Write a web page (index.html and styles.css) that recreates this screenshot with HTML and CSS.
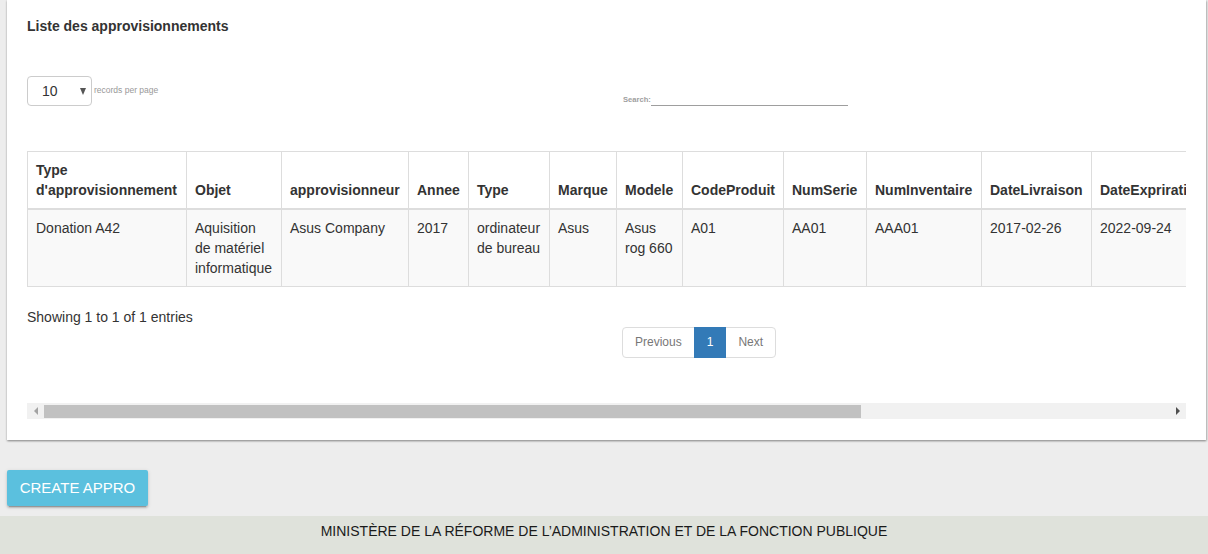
FILE: index.html
```html
<!DOCTYPE html>
<html lang="fr">
<head>
<meta charset="utf-8">
<title>Liste des approvisionnements</title>
<link rel="stylesheet" href="styles.css">
</head>
<body>
<div class="card">
  <h4 class="title">Liste des approvisionnements</h4>
  <div class="wrapper">
    <div class="controls">
      <div class="length">
        <div class="select"><span class="val">10</span><span class="caret"></span></div>
        <span class="lbl">records per page</span>
      </div>
      <div class="search">
        <span class="slbl">Search:</span><span class="sinput"></span>
      </div>
    </div>
    <div class="tablewrap">
      <table class="grid">
        <colgroup>
          <col class="c1"><col class="c2"><col class="c3"><col class="c4"><col class="c5"><col class="c6"><col class="c7"><col class="c8"><col class="c9"><col class="c10"><col class="c11"><col class="c12">
        </colgroup>
        <thead>
          <tr>
            <th>Type d'approvisionnement</th>
            <th>Objet</th>
            <th>approvisionneur</th>
            <th>Annee</th>
            <th>Type</th>
            <th>Marque</th>
            <th>Modele</th>
            <th>CodeProduit</th>
            <th>NumSerie</th>
            <th>NumInventaire</th>
            <th>DateLivraison</th>
            <th>DateExpriration</th>
          </tr>
        </thead>
        <tbody>
          <tr>
            <td>Donation A42</td>
            <td>Aquisition de matériel informatique</td>
            <td>Asus Company</td>
            <td>2017</td>
            <td>ordinateur de bureau</td>
            <td>Asus</td>
            <td>Asus rog 660</td>
            <td>A01</td>
            <td>AA01</td>
            <td>AAA01</td>
            <td>2017-02-26</td>
            <td>2022-09-24</td>
          </tr>
        </tbody>
      </table>
    </div>
    <div class="info">Showing 1 to 1 of 1 entries</div>
    <ul class="pagination">
      <li class="disabled"><span>Previous</span></li>
      <li class="active"><span>1</span></li>
      <li class="disabled"><span>Next</span></li>
    </ul>
  </div>
  <div class="hscroll">
    <span class="arrow left"></span>
    <span class="thumb"></span>
    <span class="rest"></span>
    <span class="arrow right"></span>
  </div>
</div>
<div class="btn">CREATE APPRO</div>
<footer class="footer">MINISTÈRE DE LA RÉFORME DE L’ADMINISTRATION ET DE LA FONCTION PUBLIQUE</footer>
</body>
</html>
```
FILE: styles.css
```css
* { box-sizing: border-box; }
html, body { margin: 0; padding: 0; }
body {
  background: #ededed;
  font-family: "Liberation Sans", Arial, Helvetica, sans-serif;
  font-size: 14px;
  line-height: 20px;
  color: #333;
  width: 1208px;
  height: 554px;
  overflow: hidden;
}
.card {
  margin-left: 7px;
  width: 1199px;
  background: #fff;
  padding: 16px 20px 21px;
  box-shadow: 0 1px 2px rgba(0,0,0,0.35), 1px 1px 2px rgba(0,0,0,0.15);
}
.title {
  margin: 0;
  font-size: 14px;
  line-height: 20px;
  font-weight: bold;
  color: #333;
}
.wrapper { margin-top: 40px; }
.controls {
  display: flex;
  height: 75px;
}
.length {
  display: flex;
  align-items: flex-start;
  width: 596px;
}
.select {
  width: 65px;
  height: 30px;
  border: 1px solid #ccc;
  border-radius: 4px;
  display: flex;
  align-items: center;
  padding-left: 14px;
  color: #333;
}
.select .val { font-size: 14px; width: 38px; }
.caret {
  width: 0; height: 0;
  border-left: 3.5px solid transparent;
  border-right: 3.5px solid transparent;
  border-top: 7px solid #555;
  margin-top: 1px;
}
.lbl {
  margin-left: 2px;
  margin-top: 8px;
  font-size: 8.5px;
  line-height: 12px;
  color: #999;
}
.search {
  display: flex;
  align-items: flex-end;
  margin-top: 18px;
  height: 12px;
}
.slbl {
  font-size: 7.6px;
  line-height: 12px;
  font-weight: bold;
  color: #9e9e9e;
}
.sinput {
  display: block;
  width: 197px;
  height: 12px;
  border-bottom: 1px solid #9e9e9e;
}
.tablewrap {
  width: 1159px;
  overflow: hidden;
}
.grid {
  border-collapse: collapse;
  table-layout: fixed;
  width: 1204px;
}
.c1 { width: 159px; }
.c2 { width: 95px; }
.c3 { width: 127px; }
.c4 { width: 60px; }
.c5 { width: 81px; }
.c6 { width: 67px; }
.c7 { width: 66px; }
.c8 { width: 101px; }
.c9 { width: 83px; }
.c10 { width: 115px; }
.c11 { width: 110px; }
.c12 { width: 140px; }
.grid th, .grid td {
  border: 1px solid #ddd;
  padding: 8px;
  text-align: left;
  line-height: 20px;
  font-size: 14px;
}
.grid th {
  font-weight: bold;
  vertical-align: bottom;
  border-bottom: 2px solid #ddd;
  white-space: normal;
  overflow: hidden;
}
.grid th:last-child { white-space: nowrap; }
.grid td {
  vertical-align: top;
  background: #f9f9f9;
}
.info {
  margin-top: 20px;
  line-height: 20px;
}
.pagination {
  list-style: none;
  margin: 0 0 0 595px;
  padding: 0;
  display: flex;
}
.pagination li span {
  display: block;
  padding: 6px 12px;
  font-size: 12px;
  line-height: 17px;
  border: 1px solid #ddd;
  margin-left: -1px;
  color: #777;
  background: #fff;
}
.pagination li:first-child span { margin-left: 0; border-radius: 4px 0 0 4px; }
.pagination li:last-child span { border-radius: 0 4px 4px 0; }
.pagination li.active span {
  background: #337ab7;
  border-color: #337ab7;
  color: #fff;
  position: relative;
}
.hscroll {
  margin-top: 45px;
  height: 16px;
  background: #f1f1f1;
  display: flex;
  align-items: center;
}
.arrow {
  width: 17px;
  height: 16px;
  display: flex;
  align-items: center;
  justify-content: center;
  flex: none;
}
.arrow::before {
  content: "";
  width: 0; height: 0;
  border-top: 4px solid transparent;
  border-bottom: 4px solid transparent;
}
.arrow.left::before { border-right: 4px solid #a3a3a3; }
.arrow.right::before { border-left: 4px solid #505050; }
.thumb {
  width: 817px;
  height: 13px;
  background: #c1c1c1;
  flex: none;
}
.rest { flex: 1; }
.btn {
  margin: 30px 0 10px 7px;
  width: 141px;
  height: 36px;
  line-height: 36px;
  text-align: center;
  background: #5bc0de;
  color: #fff;
  font-size: 15px;
  border-radius: 2px;
  box-shadow: 0 2px 2px 0 rgba(0,0,0,0.14), 0 1px 4px 0 rgba(0,0,0,0.12), 0 3px 1px -2px rgba(0,0,0,0.2);
}
.footer {
  height: 38px;
  background: #dfe2db;
  text-align: center;
  padding-top: 5px;
  line-height: 20px;
  font-size: 14px;
  color: #1a1a1a;
}
```
